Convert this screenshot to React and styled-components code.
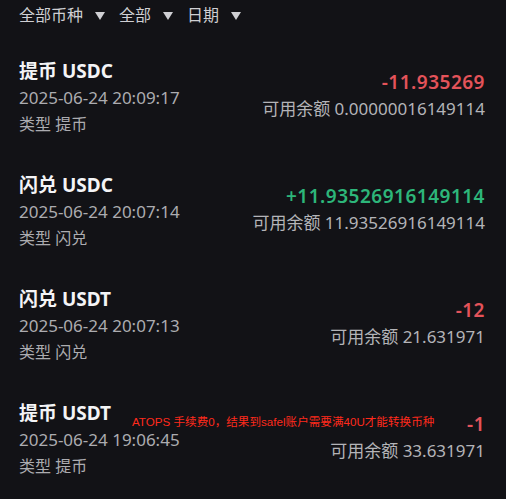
import React from 'react';
import styled, { createGlobalStyle } from 'styled-components';

const GlobalStyle = createGlobalStyle`
    body {
        margin: 0;
        background: #121216;
        font-family: "Noto Sans", "Noto Sans CJK SC", sans-serif;
    }
`;

const Page = styled.div`
    box-sizing: border-box;
    width: 506px;
    min-height: 499px;
    background: #121216;
    overflow: hidden;
`;

const FilterBar = styled.div`
    display: flex;
    align-items: center;
    gap: 14px;
    height: 30px;
    padding: 0 19px;
    margin-bottom: 10px;
`;

const Filter = styled.div`
    display: flex;
    align-items: center;
    gap: 12px;
    font-size: 16px;
    line-height: 30px;
    color: #cfcfd3;
`;

const Caret = styled.span`
    width: 0;
    height: 0;
    border-left: 5px solid transparent;
    border-right: 5px solid transparent;
    border-top: 8px solid #cfcfd3;
    margin-top: 1px;
`;

const Row = styled.div`
    position: relative;
    display: flex;
    justify-content: space-between;
    align-items: center;
    padding: 17px 21px 17px 19px;
`;

const Info = styled.div`
    display: flex;
    flex-direction: column;
`;

const Title = styled.div`
    font-size: 19px;
    font-weight: 700;
    line-height: 28px;
    color: #f4f4f6;
`;

const Time = styled.div`
    font-size: 17px;
    line-height: 26px;
    color: #acacb0;
`;

const Kind = styled.div`
    font-size: 16px;
    line-height: 26px;
    color: #acacb0;
`;

const Figures = styled.div`
    display: flex;
    flex-direction: column;
    align-items: flex-end;
    gap: 1px;
    padding-bottom: 3px;
`;

const Amount = styled.div`
    font-size: 19px;
    font-weight: 600;
    line-height: 26px;
    letter-spacing: 0.5px;
    color: ${p => (p.$up ? '#2db67a' : '#e4535a')};
`;

const Balance = styled.div`
    font-size: 17px;
    line-height: 26px;
    color: #b4b4b8;
`;

const Note = styled.div`
    position: absolute;
    left: 132px;
    top: 33px;
    font-family: "Liberation Sans", "Noto Sans CJK SC", sans-serif;
    font-size: 11.6px;
    line-height: 14px;
    color: #ff2a1c;
    white-space: nowrap;
`;

const records = [
    { title: '提币 USDC', time: '2025-06-24 20:09:17', type: '提币', amount: '-11.935269', balance: '0.00000016149114' },
    { title: '闪兑 USDC', time: '2025-06-24 20:07:14', type: '闪兑', amount: '+11.93526916149114', balance: '11.93526916149114', up: true },
    { title: '闪兑 USDT', time: '2025-06-24 20:07:13', type: '闪兑', amount: '-12', balance: '21.631971' },
    { title: '提币 USDT', time: '2025-06-24 19:06:45', type: '提币', amount: '-1', balance: '33.631971', note: 'ATOPS 手续费0，结果到safel账户需要满40U才能转换币种' },
];

export default function App() {
    return (
        <Page>
            <GlobalStyle />
            <FilterBar>
                {['全部币种', '全部', '日期'].map(label => (
                    <Filter key={label}>
                        {label}
                        <Caret />
                    </Filter>
                ))}
            </FilterBar>
            {records.map((r, i) => (
                <Row key={i}>
                    <Info>
                        <Title>{r.title}</Title>
                        <Time>{r.time}</Time>
                        <Kind>类型 {r.type}</Kind>
                    </Info>
                    <Figures>
                        <Amount $up={r.up}>{r.amount}</Amount>
                        <Balance>可用余额 {r.balance}</Balance>
                    </Figures>
                    {r.note && <Note>{r.note}</Note>}
                </Row>
            ))}
        </Page>
    );
}
